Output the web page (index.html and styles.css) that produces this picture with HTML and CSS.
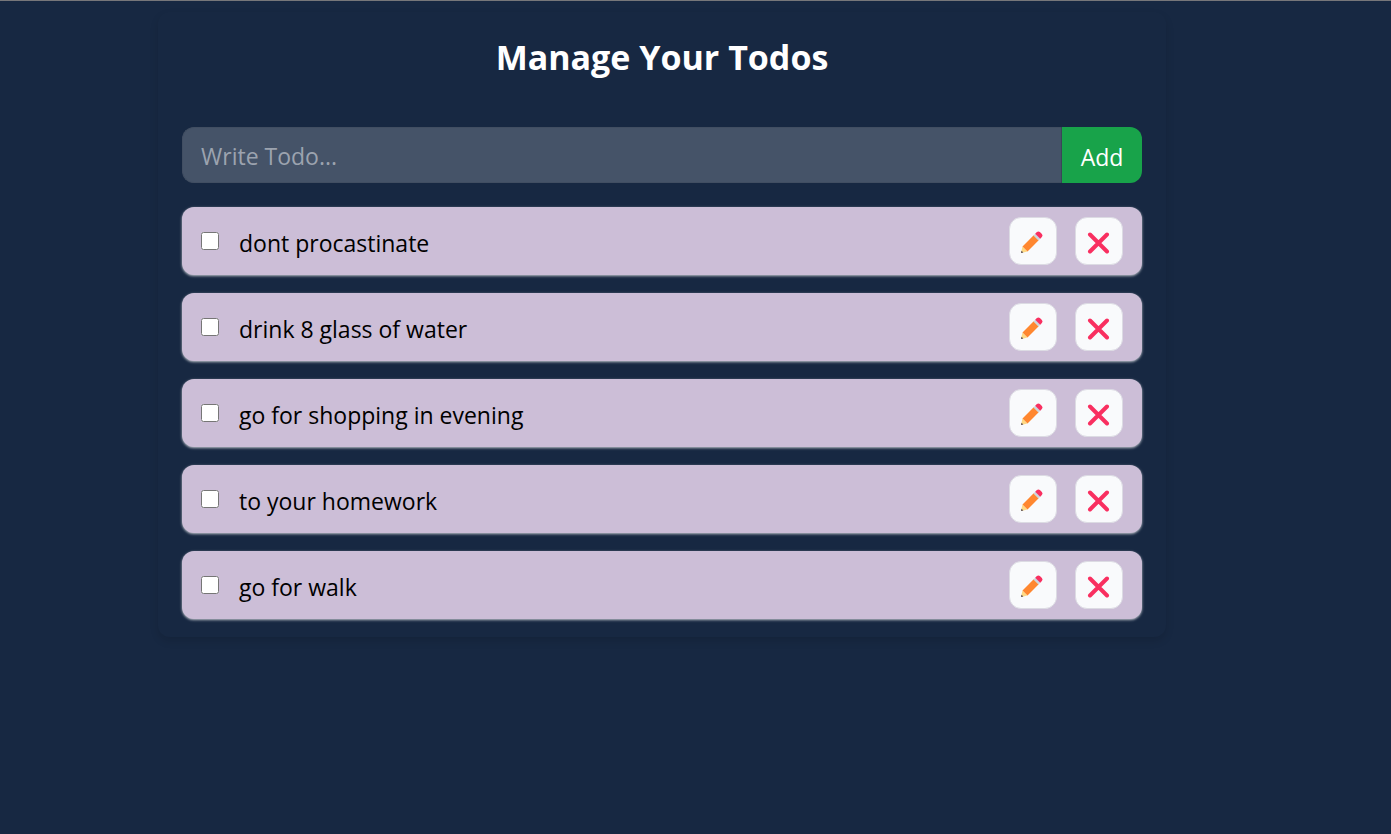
FILE: index.html
```html
<!DOCTYPE html>
<html lang="en">
<head>
<meta charset="utf-8">
<title>Manage Your Todos</title>
<link rel="stylesheet" href="styles.css">
</head>
<body>
<svg class="sprite" aria-hidden="true">
  <symbol id="pencil" viewBox="0 0 24 24">
    <path fill="#ffd983" d="M1 23l1.500-6.500 5 5z"/>
    <path fill="#4b4350" d="M1 23l.5-2.300 1.800 1.800z"/>
    <path fill="#ff8730" d="M2.500 16.500L13.700 5.300l5 5L7.500 21.500z"/>
    <path fill="#ccd6dd" d="M13.500 5.500l2-2 5 5-2 2z"/>
    <path fill="#f92f60" d="M15.200 3.800l1.700-1.700q1.500-1.300 3 0l2 2q1.300 1.500 0 3l-1.700 1.700z"/>
  </symbol>
  <symbol id="cross" viewBox="0 0 24 24">
    <path d="M4 4.500l17 17M21 4.500l-17 17" fill="none" stroke="#f92f60" stroke-width="4" stroke-linecap="round"/>
  </symbol>
</svg>
<main class="card">
  <h1 class="title">Manage Your Todos</h1>
  <form class="todo-form">
    <input class="todo-input" type="text" placeholder="Write Todo..." aria-label="Write Todo">
    <button class="add-button" type="button">Add</button>
  </form>
  <ul class="todo-list">
    <li class="todo">
      <input class="check" type="checkbox" id="todo-1">
      <label class="todo-text" for="todo-1">dont procastinate</label>
      <button class="icon-button" type="button" aria-label="Edit"><svg class="icon"><use href="#pencil"/></svg></button>
      <button class="icon-button" type="button" aria-label="Delete"><svg class="icon"><use href="#cross"/></svg></button>
    </li>
    <li class="todo">
      <input class="check" type="checkbox" id="todo-2">
      <label class="todo-text" for="todo-2">drink 8 glass of water</label>
      <button class="icon-button" type="button" aria-label="Edit"><svg class="icon"><use href="#pencil"/></svg></button>
      <button class="icon-button" type="button" aria-label="Delete"><svg class="icon"><use href="#cross"/></svg></button>
    </li>
    <li class="todo">
      <input class="check" type="checkbox" id="todo-3">
      <label class="todo-text" for="todo-3">go for shopping in evening</label>
      <button class="icon-button" type="button" aria-label="Edit"><svg class="icon"><use href="#pencil"/></svg></button>
      <button class="icon-button" type="button" aria-label="Delete"><svg class="icon"><use href="#cross"/></svg></button>
    </li>
    <li class="todo">
      <input class="check" type="checkbox" id="todo-4">
      <label class="todo-text" for="todo-4">to your homework</label>
      <button class="icon-button" type="button" aria-label="Edit"><svg class="icon"><use href="#pencil"/></svg></button>
      <button class="icon-button" type="button" aria-label="Delete"><svg class="icon"><use href="#cross"/></svg></button>
    </li>
    <li class="todo">
      <input class="check" type="checkbox" id="todo-5">
      <label class="todo-text" for="todo-5">go for walk</label>
      <button class="icon-button" type="button" aria-label="Edit"><svg class="icon"><use href="#pencil"/></svg></button>
      <button class="icon-button" type="button" aria-label="Delete"><svg class="icon"><use href="#cross"/></svg></button>
    </li>
  </ul>
</main>
</body>
</html>
```

FILE: styles.css
```css
* {
  box-sizing: border-box;
}

body {
  margin: 0;
  padding: 11px 67px 0 0;
  min-height: 100vh;
  border-top: 1px solid #77777a;
  background: #172842;
  color: #fff;
  font: 23px/36px "Segoe UI", "Open Sans", "Noto Sans", sans-serif;
}

.sprite {
  display: none;
}

.card {
  max-width: 1008px;
  margin: 0 auto;
  padding: 24px 24px 18px;
  border-radius: 12px;
  box-shadow: 0 4px 9px rgba(0, 0, 0, 0.12);
}

.title {
  margin: 0 0 48px;
  font-size: 34px;
  line-height: 43px;
  font-weight: 700;
  text-align: center;
}

.todo-form {
  display: flex;
  margin-bottom: 24px;
}

.todo-input {
  flex: 1;
  min-width: 0;
  height: 56px;
  padding: 2px 18px 0;
  border: 1px solid #414e62;
  border-right-color: #3a4659;
  border-radius: 12px 0 0 12px;
  background: #455368;
  color: #fff;
  font: inherit;
}

.todo-input::placeholder {
  color: #9ca3af;
}

.add-button {
  min-width: 80px;
  padding: 3px 18px 0;
  border: 0;
  border-radius: 0 12px 12px 0;
  background: #18a34a;
  color: #fff;
  font: inherit;
}

.todo-list {
  display: grid;
  gap: 18px;
  margin: 0;
  padding: 0;
  list-style: none;
}

.todo {
  display: flex;
  align-items: center;
  gap: 18px;
  padding: 10px 19px;
  border-radius: 12px;
  background: #ccbed7;
  box-shadow: 0 1px 3px rgba(255, 255, 255, 0.5), 0 1px 2px rgba(255, 255, 255, 0.3);
  color: #000;
}

.check {
  width: 18px;
  height: 18px;
  margin: 0 2px 0 0;
}

.todo-text {
  flex: 1;
  padding-top: 3px;
}

.icon-button {
  display: grid;
  place-items: center;
  width: 48px;
  height: 48px;
  padding: 2px 2px 0 0;
  border: 1px solid #dcdbe3;
  border-radius: 12px;
  background: #f9fafc;
}

.icon {
  width: 24px;
  height: 24px;
}
```
